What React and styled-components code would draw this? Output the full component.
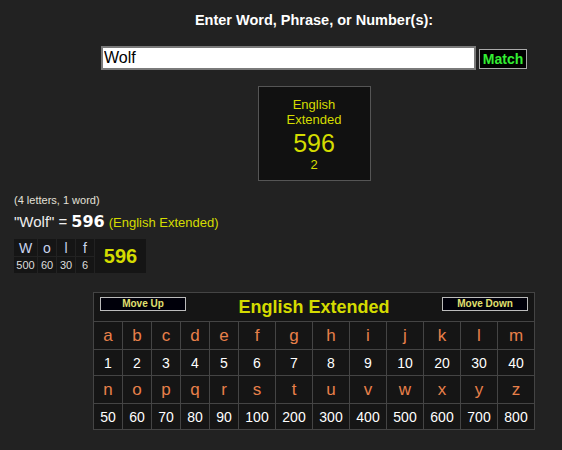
import React from 'react';
import styled, { createGlobalStyle } from 'styled-components';

const colors = {
  page: '#222222',
  cell: '#151515',
  line: '#444444',
  yellow: '#d4dc00',
  orange: '#e8804a',
  green: '#33ee33',
  white: '#ffffff',
};

const GlobalStyle = createGlobalStyle`
  body {
    margin: 0;
    background: ${colors.page};
    font-family: "Liberation Sans", Arial, sans-serif;
  }
`;

const Page = styled.div`
  width: 562px;
  height: 450px;
  overflow: hidden;
`;

const TopBlock = styled.div`
  margin-left: 93px;
  width: 442px;
  display: flex;
  flex-direction: column;
  align-items: center;
`;

const Heading = styled.div`
  margin-top: 12px;
  font-size: 14.5px;
  line-height: 16px;
  font-weight: bold;
  color: ${colors.white};
`;

const SearchRow = styled.div`
  margin-top: 18px;
  display: flex;
  align-items: center;
  gap: 3px;
`;

const SearchInput = styled.input`
  box-sizing: border-box;
  width: 375px;
  height: 24px;
  border: 2px solid #7a7a7a;
  padding: 0 1px;
  background: #fff;
  color: #000;
  font-family: "Liberation Sans", Arial, sans-serif;
  font-size: 16px;
  outline: none;
`;

const MatchButton = styled.button`
  box-sizing: border-box;
  width: 48px;
  height: 20px;
  margin-top: 2px;
  padding: 0;
  background: #000;
  border: 1px solid #aaaaaa;
  color: ${colors.green};
  font-family: "Liberation Sans", Arial, sans-serif;
  font-size: 14px;
  font-weight: bold;
`;

const ResultBox = styled.div`
  box-sizing: border-box;
  margin-top: 16px;
  width: 113px;
  height: 95px;
  padding-top: 10px;
  background: #111111;
  border: 1px solid #555555;
  color: ${colors.yellow};
  text-align: center;
  font-size: 13px;
  line-height: 15px;
`;

const ResultValue = styled.div`
  margin-top: 3px;
  font-size: 25px;
  line-height: 27px;
`;

const Summary = styled.div`
  padding-left: 14px;
`;

const Counts = styled.div`
  margin-top: 13px;
  font-size: 11px;
  line-height: 13px;
  color: #e2e0d8;
`;

const Equation = styled.div`
  margin-top: 6px;
  height: 18px;
  display: flex;
  align-items: baseline;
  gap: 4px;
  font-size: 15px;
  line-height: 18px;
  color: #eeeeee;
`;

const EquationTotal = styled.span`
  font-family: "DejaVu Sans", sans-serif;
  font-weight: bold;
  font-size: 16px;
  color: ${colors.white};
`;

const EquationCipher = styled.span`
  font-size: 13px;
  color: ${colors.yellow};
`;

const Breakdown = styled.div`
  margin-top: 8px;
  display: inline-grid;
  grid-template-columns: 23px repeat(3, 18px) 51px;
  grid-template-rows: 17px 16px;
  gap: 1px;
`;

const BreakCell = styled.div`
  display: flex;
  align-items: center;
  justify-content: center;
  background: ${colors.cell};
  color: ${({ small }) => (small ? '#dddddd' : '#c8d4ee')};
  font-size: ${({ small }) => (small ? '11px' : '14px')};
`;

const BreakTotal = styled.div`
  grid-column: 5;
  grid-row: 1 / span 2;
  display: flex;
  align-items: center;
  justify-content: center;
  background: ${colors.cell};
  color: ${colors.yellow};
  font-size: 20px;
  font-weight: bold;
`;

const CipherTable = styled.div`
  margin-top: 19px;
  margin-left: 93px;
  display: inline-grid;
  grid-template-columns: repeat(5, 28px) repeat(8, 36px);
  grid-template-rows: 28px 27px 25px 27px 25px;
  gap: 1px;
  padding: 1px;
  background: ${colors.line};
`;

const TitleRow = styled.div`
  grid-column: 1 / -1;
  display: flex;
  justify-content: space-between;
  padding: 0 6px;
  background: ${colors.cell};
`;

const MoveButton = styled.button`
  box-sizing: border-box;
  width: 86px;
  height: 14px;
  margin-top: 4px;
  padding: 0;
  background: #00000a;
  border: 1px solid #bbbbbb;
  color: #e0e070;
  font-family: "Liberation Sans", Arial, sans-serif;
  font-size: 10px;
  font-weight: bold;
  line-height: 12px;
`;

const CipherTitle = styled.div`
  align-self: center;
  font-size: 18px;
  font-weight: bold;
  color: ${colors.yellow};
`;

const Cell = styled.div`
  display: flex;
  align-items: center;
  justify-content: center;
  background: ${colors.cell};
  color: ${({ letter }) => (letter ? colors.orange : colors.white)};
  font-size: ${({ letter }) => (letter ? '17px' : '14px')};
`;

const alphabet = 'abcdefghijklmnopqrstuvwxyz'.split('');
const values = [
  1, 2, 3, 4, 5, 6, 7, 8, 9, 10, 20, 30, 40,
  50, 60, 70, 80, 90, 100, 200, 300, 400, 500, 600, 700, 800,
];

const word = [
  { ch: 'W', val: 500 },
  { ch: 'o', val: 60 },
  { ch: 'l', val: 30 },
  { ch: 'f', val: 6 },
];

const App = () => {
  const halves = [0, 13];
  return (
    <Page>
      <GlobalStyle />
      <TopBlock>
        <Heading>Enter Word, Phrase, or Number(s):</Heading>
        <SearchRow>
          <SearchInput defaultValue="Wolf" />
          <MatchButton>Match</MatchButton>
        </SearchRow>
        <ResultBox>
          <div>English</div>
          <div>Extended</div>
          <ResultValue>596</ResultValue>
          <div>2</div>
        </ResultBox>
      </TopBlock>

      <Summary>
        <Counts>(4 letters, 1 word)</Counts>
        <Equation>
          <span>"Wolf" =</span>
          <EquationTotal>596</EquationTotal>
          <EquationCipher>(English Extended)</EquationCipher>
        </Equation>
        <Breakdown>
          {word.map((w) => (
            <BreakCell key={`c${w.ch}`}>{w.ch}</BreakCell>
          ))}
          <BreakTotal>596</BreakTotal>
          {word.map((w) => (
            <BreakCell key={`v${w.ch}`} small>{w.val}</BreakCell>
          ))}
        </Breakdown>
      </Summary>

      <CipherTable>
        <TitleRow>
          <MoveButton>Move Up</MoveButton>
          <CipherTitle>English Extended</CipherTitle>
          <MoveButton>Move Down</MoveButton>
        </TitleRow>
        {halves.map((start) => (
          <React.Fragment key={start}>
            {alphabet.slice(start, start + 13).map((l) => (
              <Cell key={l} letter>{l}</Cell>
            ))}
            {values.slice(start, start + 13).map((v) => (
              <Cell key={v}>{v}</Cell>
            ))}
          </React.Fragment>
        ))}
      </CipherTable>
    </Page>
  );
};

export default App;
